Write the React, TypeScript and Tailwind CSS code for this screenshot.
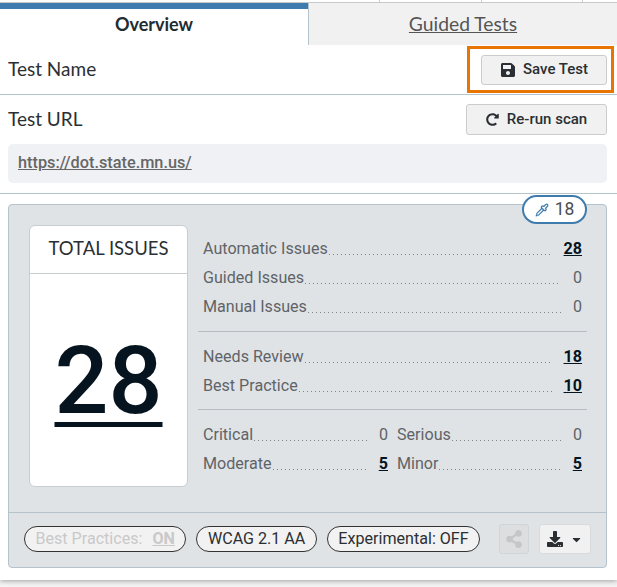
import { FaSave, FaRedoAlt, FaShareAlt, FaDownload, FaCaretDown } from "react-icons/fa";
import { Pipette } from "lucide-react";

const Row = ({ label, value, link }: { label: string; value: string; link?: boolean }) => (
  <div className="flex items-baseline h-[29px] leading-[29px] text-[16.1px] text-[#5f6368]">
    <span>{label}</span>
    <span className="flex-1 ml-[1px] h-[1px] translate-y-[1px] bg-[repeating-linear-gradient(90deg,#7d858a_0_1px,transparent_1px_4px)]"></span>
    <span className={link ? "ml-[12px] font-bold underline text-[#05141e]" : "ml-[12px] text-[#5f6368]"}>{value}</span>
  </div>
);

const Pill = ({ children, className }: { children: React.ReactNode; className?: string }) => (
  <div className={"h-[26px] px-[10.5px] flex items-center rounded-full border border-[#333] bg-[#f2f2f2] text-[16.1px] " + (className ?? "")}>
    {children}
  </div>
);

export default function App() {
  return (
    <div className="h-[587px] bg-[#f4f4f4] font-['Roboto',sans-serif] overflow-hidden">
      <div className="h-[580px] bg-white shadow-[0_1px_5px_rgba(0,0,0,0.35)]">
        {/* strip from the page behind */}
        <div className="h-[3px] flex justify-end border-b border-[#c9c9c9] bg-white">
          <div className="w-[102px] border-l border-[#c9c9c9]"></div>
          <div className="w-[101px] border-l border-[#c9c9c9]"></div>
          <div className="w-[35px] border-l border-[#c9c9c9]"></div>
        </div>

        <div className="flex h-[42px]">
          <div className="w-[308px] border-t-[6px] border-[#3f7cad] flex items-center justify-center pb-[6px] text-[18px] font-bold font-['Lato',sans-serif] text-[#212b32]">
            Overview
          </div>
          <div className="flex-1 bg-[#f1f1f1] border-l border-[#b5c3cc] flex items-center justify-center text-[19.3px] text-[#555] underline font-['Lato',sans-serif]">
            Guided Tests
          </div>
        </div>

        <div className="h-[50px] pl-[8px] pr-[3px] flex items-center justify-between border-b border-[#b5c3cc]">
          <span className="font-['Lato',sans-serif] text-[19px] text-[#2b2f33]">Test Name</span>
          <div className="w-[147px] h-[47px] border-[3px] border-[#e87500] flex items-center justify-end pr-[4px]">
            <button className="w-[126px] h-[30px] flex items-center justify-center gap-[7px] rounded-[3px] border border-[#ccc] bg-[#f1f1f1] text-[15px] font-medium text-[#2b2f33]">
              <FaSave className="text-[16px]" />
              Save Test
            </button>
          </div>
        </div>

        <div className="h-[99px] px-[10px] pl-[8px] border-b border-[#b5c3cc]">
          <div className="h-[48px] flex items-center justify-between">
            <span className="font-['Lato',sans-serif] text-[19px] text-[#2b2f33]">Test URL</span>
            <button className="w-[141px] h-[31px] flex items-center justify-center gap-[8px] rounded-[3px] border border-[#ccc] bg-[#f1f1f1] text-[15px] font-medium text-[#2b2f33]">
              <FaRedoAlt className="text-[13px]" />
              Re-run scan
            </button>
          </div>
          <div className="h-[39px] mt-[1px] px-[10px] flex items-center rounded-[5px] bg-[#f0f1f5] text-[16.3px] font-medium text-[#666] underline">
            https://dot.state.mn.us/
          </div>
        </div>

        <div className="relative mt-[10px] ml-[8px] w-[599px] h-[364px] rounded-[4px] border border-[#b5c3cc] bg-[#dfe3e6]">
          <div className="absolute right-[19px] top-[-10px] w-[65px] h-[29px] rounded-full border-2 border-[#3f7cad] bg-white flex items-center justify-center gap-[6px] text-[17.5px] text-[#4a4f54]">
            <Pipette size={14} className="text-[#3f7cad]" />
            18
          </div>

          <div className="h-[307px] pt-[20px] pl-[20px] pr-[19px] flex">
            <div className="w-[159px] h-[262px] rounded-[6px] border border-[#c8cdd0] bg-white flex flex-col">
              <div className="h-[48px] pb-[2px] border-b border-[#c8cdd0] flex items-center justify-center font-['Lato',sans-serif] text-[18.5px] text-[#2b2f33]">
                TOTAL ISSUES
              </div>
              <div className="flex-1 pt-[2px] flex items-center justify-center text-[95px] font-medium text-[#05141e] underline decoration-[5px] underline-offset-[9px]">
                28
              </div>
            </div>

            <div className="flex-1 ml-[10px]">
              <div className="h-[107px] px-[5px] pt-[9px] border-b border-[#b5bcc2]">
                <Row label="Automatic Issues" value="28" link />
                <Row label="Guided Issues" value="0" />
                <Row label="Manual Issues" value="0" />
              </div>
              <div className="h-[78px] px-[5px] pt-[10px] border-b border-[#b5bcc2]">
                <Row label="Needs Review" value="18" link />
                <Row label="Best Practice" value="10" link />
              </div>
              <div className="px-[5px] pt-[10px] grid grid-cols-[185px_185px] gap-x-[9px]">
                <Row label="Critical" value="0" />
                <Row label="Serious" value="0" />
                <Row label="Moderate" value="5" link />
                <Row label="Minor" value="5" link />
              </div>
            </div>
          </div>

          <div className="h-[55px] pb-[2px] border-t border-[#b5c3cc] pl-[15px] flex items-center">
            <Pill className="text-[#c9c9c9] gap-[10px]">
              <span>Best Practices:</span>
              <span className="font-bold underline">ON</span>
            </Pill>
            <Pill className="ml-[10px] text-[#2b2f33]">WCAG 2.1 AA</Pill>
            <Pill className="ml-[10px] text-[#2b2f33]">Experimental: OFF</Pill>
            <button className="ml-[19px] w-[30px] h-[30px] rounded-[3px] border border-[#d2d5d8] bg-[#dcdedf] flex items-center justify-center text-[#c4c7c9]">
              <FaShareAlt className="text-[18px]" />
            </button>
            <button className="ml-[10px] w-[52px] h-[30px] rounded-[3px] border border-[#d8dadc] bg-[#f1f1f1] flex items-center justify-center gap-[7px] text-[#2b2f33]">
              <FaDownload className="text-[16px]" />
              <FaCaretDown className="text-[13px]" />
            </button>
          </div>
        </div>
      </div>
    </div>
  );
}
